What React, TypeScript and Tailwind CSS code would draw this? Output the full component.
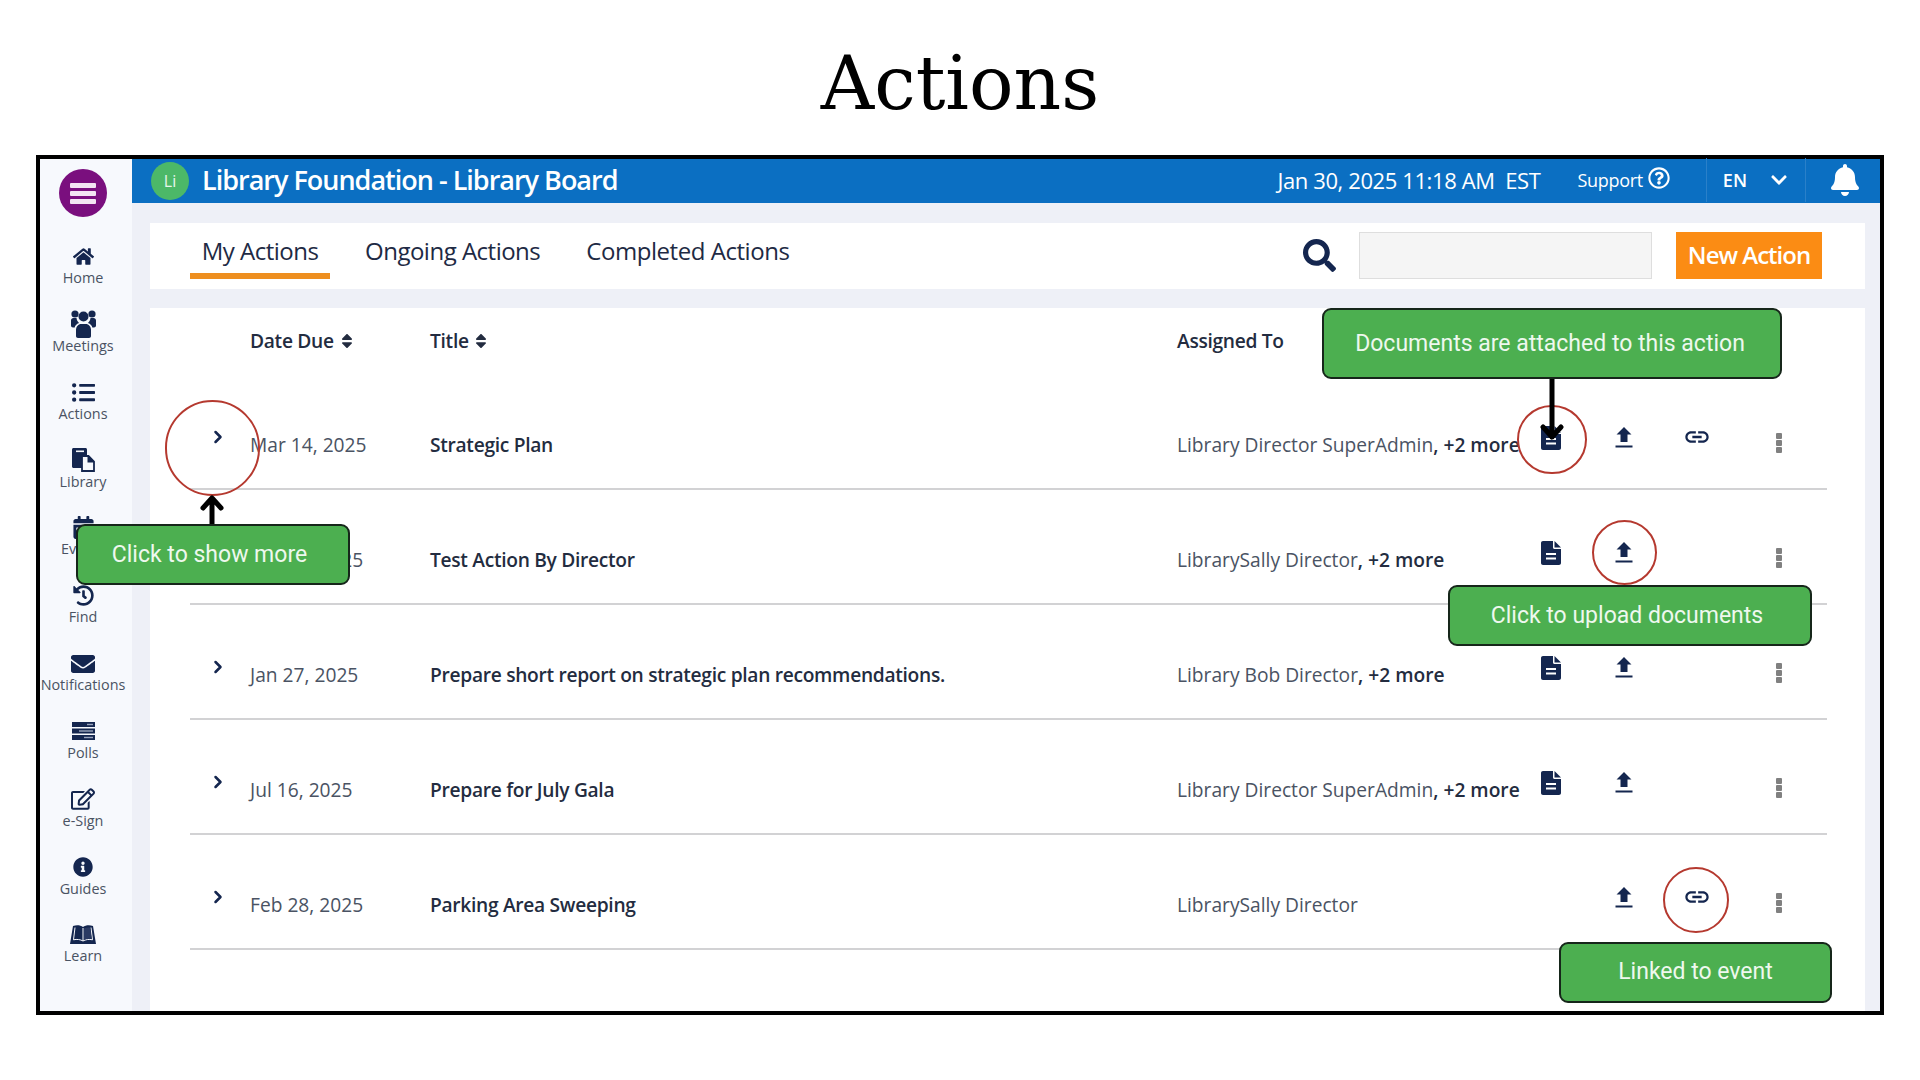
import { ChevronRight } from "lucide-react";
import {
  FaBell, FaCalendarAlt, FaChevronDown, FaEnvelope, FaHistory, FaHome, FaInfoCircle, FaListUl,
  FaRegEdit, FaRegQuestionCircle, FaSearch, FaSort,
} from "react-icons/fa";
import { MdLink } from "react-icons/md";

const navy = "text-[#14264f]";

// these don't exist in the icon packs in the old FontAwesome shape
const GroupIcon = () => (
  <svg width="25" height="28" viewBox="0 0 25 28" fill="currentColor">
    <circle cx="4" cy="4" r="3.6" />
    <circle cx="21" cy="4" r="3.6" />
    <circle cx="12.5" cy="6.5" r="5" />
    <path d="M0 10.5c0-1.5 1-2.5 2.5-2.5h3c.3 2 1 3.500 2.500 5-2.500 1-4 2.500-4.300 4.500H2c-1.200 0-2-.8-2-2zM25 10.500c0-1.500-1-2.500-2.500-2.500h-3c-.3 2-1 3.500-2.500 5 2.500 1 4 2.500 4.300 4.500H23c1.200 0 2-.8 2-2z" />
    <path d="M5 20c0-3.500 2.500-6 5-6h5c2.500 0 5 2.500 5 6v6c0 1.200-.8 2-2 2H7c-1.200 0-2-.8-2-2z" />
  </svg>
);

const LibraryIcon = () => (
  <svg width="23" height="24" viewBox="0 0 23 24">
    <path fill="currentColor" d="M1.500 0h12c.8 0 1.500.7 1.500 1.500V20H1.500C.7 20 0 19.300 0 18.500v-17C0 .7.7 0 1.500 0z" />
    <rect x="4" y="2.500" width="8" height="1.600" fill="#f7f9fd" />
    <path fill="#f7f9fd" stroke="currentColor" strokeWidth="1.800" d="M10 8h6.500l5.500 5.500V23H10z" />
    <path fill="currentColor" d="M15.500 8h1l5.500 5.500v1h-6.500z" />
  </svg>
);

const PollsIcon = () => (
  <svg width="23" height="18" viewBox="0 0 23 18" fill="currentColor">
    <rect width="23" height="5" />
    <rect y="6.500" width="23" height="5" />
    <rect y="13" width="23" height="5" />
    <rect x="15" y="1.800" width="6" height="1.400" fill="#9aa5bd" />
    <rect x="7" y="8.300" width="14" height="1.400" fill="#9aa5bd" />
    <rect x="12" y="14.800" width="9" height="1.400" fill="#9aa5bd" />
  </svg>
);

const BookIcon = () => (
  <svg width="26" height="20" viewBox="0 0 26 20">
    <path fill="currentColor" d="M3 1c3.500-1.500 7.500-1 10 1 2.500-2 6.500-2.500 10-1l3 18H0z" />
    <path fill="none" stroke="#f7f9fd" strokeWidth="1" d="M13 3v13c-2.500-1.500-6-2-9.500-1.200L5 2.500M13 16c2.500-1.500 6-2 9.500-1.200L21 2.500" />
    <path fill="#2a3a63" d="M14 3.500c2-1 4.500-1.200 6.200-.7l1.400 11c-2.700-.4-5.400 0-7.600 1z" />
  </svg>
);

const DocIcon = () => (
  <svg width="20" height="24" viewBox="0 0 20 24">
    <path fill="currentColor" d="M2 0h10v6.500c0 .8.700 1.500 1.500 1.500H20v14c0 1.100-.9 2-2 2H2c-1.100 0-2-.9-2-2V2C0 .9.900 0 2 0z" />
    <path fill="currentColor" d="M13.500 0 20 6.500h-6.500z" />
    <rect x="5" y="12" width="10" height="2" fill="#fff" />
    <rect x="5" y="16.500" width="10" height="2" fill="#fff" />
  </svg>
);

const UploadIcon = () => (
  <svg width="18" height="21" viewBox="0 0 18 21" fill="currentColor">
    <path d="M9 0l7.500 7.500h-4V15h-7V7.500h-4z" />
    <rect x="0.500" y="18.500" width="17" height="2" />
  </svg>
);

const nav = [
  { label: "Home", icon: <FaHome size={21} /> },
  { label: "Meetings", icon: <GroupIcon /> },
  { label: "Actions", icon: <FaListUl size={23} /> },
  { label: "Library", icon: <LibraryIcon /> },
  { label: "Events", icon: <FaCalendarAlt size={23} /> },
  { label: "Find", icon: <FaHistory size={21} /> },
  { label: "Notifications", icon: <FaEnvelope size={24} /> },
  { label: "Polls", icon: <PollsIcon /> },
  { label: "e-Sign", icon: <FaRegEdit size={24} /> },
  { label: "Guides", icon: <FaInfoCircle size={20} /> },
  { label: "Learn", icon: <BookIcon /> },
];

const rows = [
  { date: "Mar 14, 2025", title: "Strategic Plan", who: "Library Director SuperAdmin", more: true, doc: true, link: true },
  { date: "Feb 18, 2025", title: "Test Action By Director", who: "LibrarySally Director", more: true, doc: true, link: false },
  { date: "Jan 27, 2025", title: "Prepare short report on strategic plan recommendations.", who: "Library Bob Director", more: true, doc: true, link: false },
  { date: "Jul 16, 2025", title: "Prepare for July Gala", who: "Library Director SuperAdmin", more: true, doc: true, link: false },
  { date: "Feb 28, 2025", title: "Parking Area Sweeping", who: "LibrarySally Director", more: false, doc: false, link: true },
];

function Row({ r }: { r: (typeof rows)[number] }) {
  return (
    <div className="flex h-[115px] items-start border-b-2 border-[#d2d2d4] text-[19.2px] leading-[28px]">
      <div className="w-[60px] pl-[18px] pt-[52px]"><ChevronRight size={20} strokeWidth={3} className={navy} /></div>
      <div className="w-[180px] pt-[56px] text-[#4a5363]">{r.date}</div>
      <div className="w-[747px] pt-[56px] font-semibold tracking-[-0.3px] text-[#232c40]">{r.title}</div>
      <div className="w-[337px] whitespace-nowrap pt-[56px] text-[#4a5363]">
        {r.who}
        {r.more && <span className="font-semibold text-[#232c40]">, +2 more</span>}
      </div>
      <div className={`flex w-[73px] justify-center pl-[1px] pt-[51px] ${navy}`}>{r.doc && <DocIcon />}</div>
      <div className={`flex w-[73px] justify-center pt-[52px] ${navy}`}><UploadIcon /></div>
      <div className={`flex w-[73px] justify-center pt-[48px] ${navy}`}>{r.link && <MdLink size={28} />}</div>
      <div className="flex w-[92px] flex-col items-center gap-[1px] pt-[58px]">
        <span className="h-[6px] w-[6px] rounded-[1px] bg-[#808080]" />
        <span className="h-[6px] w-[6px] rounded-[1px] bg-[#808080]" />
        <span className="h-[6px] w-[6px] rounded-[1px] bg-[#808080]" />
      </div>
    </div>
  );
}

function Note({ text, className }: { text: string; className: string }) {
  return (
    <div className={`absolute flex items-center justify-center rounded-[9px] border-2 border-[#16261a] bg-[#4caf50] font-['Roboto',sans-serif] text-[23px] text-[#eef8ee] ${className}`}>
      {text}
    </div>
  );
}

export default function App() {
  return (
    <div className="relative flex h-[1080px] w-[1920px] flex-col items-center overflow-hidden bg-white font-['Open_Sans',sans-serif]">
      <h1 className="flex h-[155px] items-center pt-[12px] font-['DejaVu_Serif',serif] text-[74px] text-black">Actions</h1>

      <div className="flex h-[860px] w-[1848px] border-4 border-black">
        {/* sidebar */}
        <aside className="flex w-[92px] flex-none flex-col items-center bg-[#f7f9fd] pr-[6px]">
          <div className="mb-[27px] mt-[10px] flex h-[48px] w-[48px] flex-none flex-col items-center justify-center gap-[3px] rounded-full bg-[#7a0f7e]">
            <span className="h-[5px] w-[26px] rounded-[1px] bg-[#f3e4f3]" />
            <span className="h-[5px] w-[26px] rounded-[1px] bg-[#f3e4f3]" />
            <span className="h-[5px] w-[26px] rounded-[1px] bg-[#f3e4f3]" />
          </div>
          {nav.map((n) => (
            <div key={n.label} className="flex h-[67.85px] w-full flex-none flex-col items-center">
              <div className={`flex h-[25px] items-center ${navy}`}>{n.icon}</div>
              <span className="whitespace-nowrap text-[14.4px] leading-[18px] text-[#4a5363]">{n.label}</span>
            </div>
          ))}
        </aside>

        <div className="flex min-w-0 flex-1 flex-col bg-[#eef0f7]">
          {/* top bar */}
          <header className="flex h-[44px] flex-none items-center bg-[#0b6fc2] pb-[2px] pl-[19px] pr-[19px] text-white">
            <div className="mt-[2px] flex h-[38px] w-[38px] items-center justify-center rounded-full bg-[#4cb868] text-[16px] text-[#e8f6ec]">Li</div>
            <span className="ml-[13px] text-[27px] font-semibold tracking-[-1px]">Library Foundation - Library Board</span>
            <span className="ml-auto whitespace-pre text-[22px] tracking-[-0.4px]">Jan 30, 2025 11:18 AM  EST</span>
            <span className="ml-[37px] text-[18px] tracking-[-0.3px]">Support</span>
            <FaRegQuestionCircle size={22} className="mb-[4px] ml-[5px]" />
            <div className="ml-[36px] flex h-[44px] items-center border-x border-[#2a80c9] pl-[16px] pr-[18px]">
              <span className="text-[18px] font-semibold">EN</span>
              <FaChevronDown size={18} className="ml-[23px] mr-[-1px]" />
            </div>
            <FaBell size={32} className="ml-[23px]" />
          </header>

          <main className="flex flex-1 flex-col gap-[19px] pl-[18px] pr-[15px] pt-[20px]">
            {/* tabs */}
            <div className="flex h-[66px] flex-none items-start bg-white pl-[40px] pr-[43px]">
              <div className="mr-[35px] flex h-[56px] w-[140px] items-center justify-center border-b-[6px] border-[#ee8f1f] pt-[5px] text-[24px] font-medium tracking-[-0.5px] text-[#1e2a44]">My Actions</div>
              <div className="mr-[46px] flex h-[56px] items-center pb-[1px] text-[24px] font-medium tracking-[-0.5px] text-[#1e2a44]">Ongoing Actions</div>
              <div className="flex h-[56px] items-center pb-[1px] text-[24px] font-medium tracking-[-0.45px] text-[#1e2a44]">Completed Actions</div>
              <FaSearch size={33} className={`ml-auto mr-[23px] mt-[16px] ${navy}`} />
              <div className="mr-[24px] mt-[9px] h-[47px] w-[293px] border border-[#dedede] bg-[#f5f5f5]" />
              <button className="mt-[9px] h-[47px] w-[146px] bg-[#fb8c14] pb-[2px] text-[24px] font-semibold tracking-[-1px] text-white">New Action</button>
            </div>

            {/* table */}
            <section className="flex-1 bg-white pl-[40px] pr-[38px]">
              <div className="flex h-[67px] items-center text-[19.2px] font-semibold tracking-[-0.3px] text-[#232c40]">
                <div className="ml-[60px] flex w-[180px] items-center gap-[4px]">Date Due <FaSort size={18} /></div>
                <div className="flex w-[747px] items-center gap-[3px]">Title <FaSort size={18} /></div>
                <div>Assigned To</div>
              </div>
              {rows.map((r) => <Row key={r.title} r={r} />)}
            </section>
          </main>
        </div>
      </div>

      {/* callouts drawn over the screenshot */}
      <div className="absolute left-[165px] top-[400px] h-[96px] w-[95px] rounded-full border-2 border-[#b5392f]" />
      <div className="absolute left-[1517px] top-[405px] h-[69px] w-[70px] rounded-full border-2 border-[#b5392f]" />
      <div className="absolute left-[1592px] top-[520px] h-[65px] w-[65px] rounded-full border-2 border-[#b5392f]" />
      <div className="absolute left-[1663px] top-[867px] h-[66px] w-[66px] rounded-full border-2 border-[#b5392f]" />

      <svg className="absolute left-[198px] top-[494px]" width="28" height="32" viewBox="0 0 28 32" fill="none" stroke="#000" strokeWidth="5" strokeLinecap="round" strokeLinejoin="round">
        <path d="M14 32V5M5 14l9-10 9 10" />
      </svg>
      <svg className="absolute left-[1538px] top-[378px]" width="28" height="64" viewBox="0 0 28 64" fill="none" stroke="#000" strokeWidth="5" strokeLinecap="round" strokeLinejoin="round">
        <path d="M14 0v59M5 49l9 10 9-10" />
      </svg>

      <Note text="Documents are attached to this action" className="left-[1322px] top-[308px] h-[71px] w-[460px] pr-[4px] pt-[2px]" />
      <Note text="Click to show more" className="left-[76px] top-[524px] h-[61px] w-[274px] pr-[7px] pt-[2px]" />
      <Note text="Click to upload documents" className="left-[1448px] top-[585px] h-[61px] w-[364px] pr-[6px] pt-[2px]" />
      <Note text="Linked to event" className="left-[1559px] top-[942px] h-[61px] w-[273px]" />
    </div>
  );
}
